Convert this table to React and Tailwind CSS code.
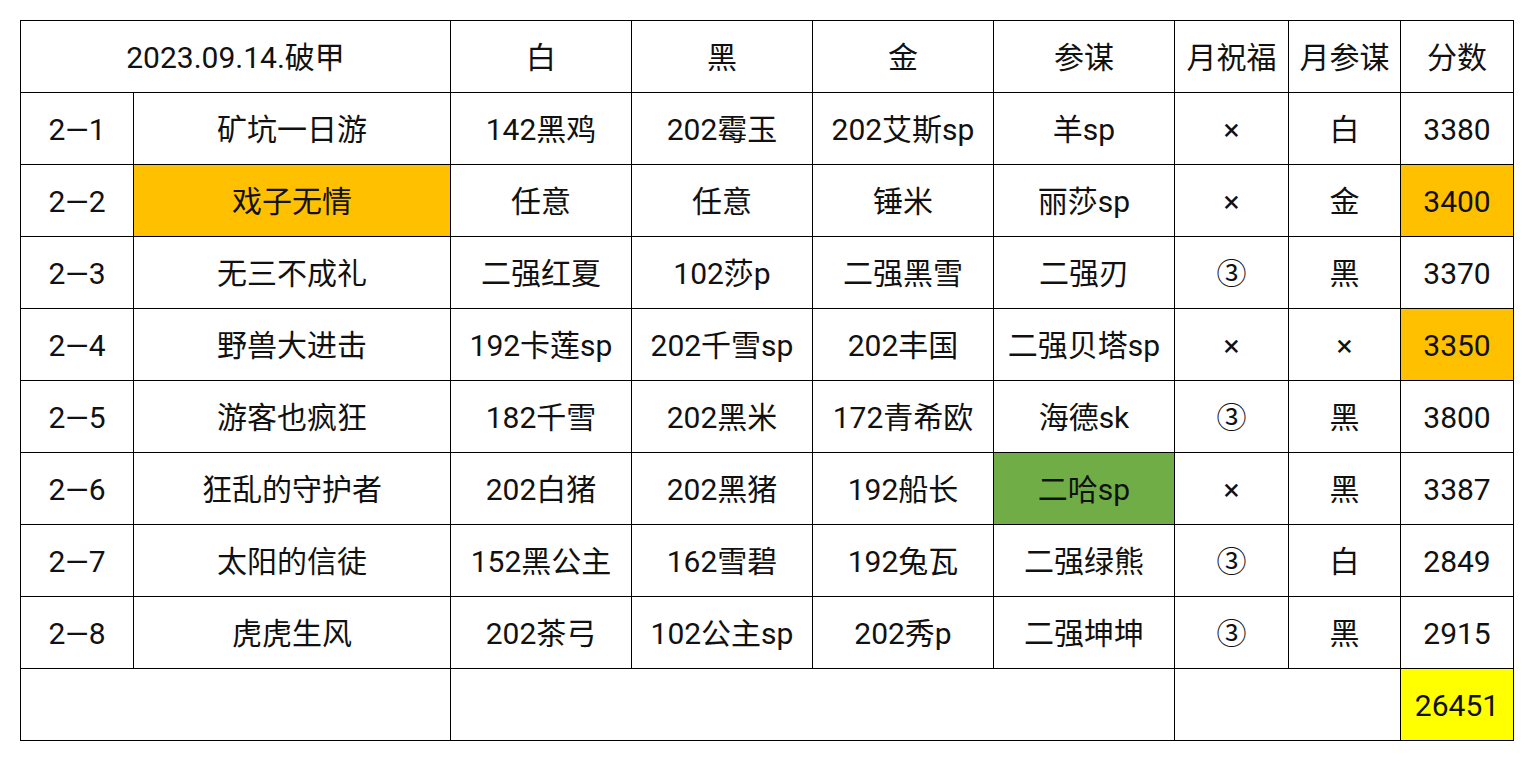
const rows = [
  ['2—1', '矿坑一日游', '142黑鸡', '202霉玉', '202艾斯sp', '羊sp', '×', '白', '3380'],
  ['2—2', '戏子无情', '任意', '任意', '锤米', '丽莎sp', '×', '金', '3400'],
  ['2—3', '无三不成礼', '二强红夏', '102莎p', '二强黑雪', '二强刃', '③', '黑', '3370'],
  ['2—4', '野兽大进击', '192卡莲sp', '202千雪sp', '202丰国', '二强贝塔sp', '×', '×', '3350'],
  ['2—5', '游客也疯狂', '182千雪', '202黑米', '172青希欧', '海德sk', '③', '黑', '3800'],
  ['2—6', '狂乱的守护者', '202白猪', '202黑猪', '192船长', '二哈sp', '×', '黑', '3387'],
  ['2—7', '太阳的信徒', '152黑公主', '162雪碧', '192兔瓦', '二强绿熊', '③', '白', '2849'],
  ['2—8', '虎虎生风', '202茶弓', '102公主sp', '202秀p', '二强坤坤', '③', '黑', '2915'],
];

// cells with a fill, keyed by "row-col"
const fills = {
  '1-1': 'bg-[#ffc000]',
  '1-8': 'bg-[#ffc000]',
  '3-8': 'bg-[#ffc000]',
  '5-5': 'bg-[#70ad47]',
};

const widths = ['w-[113px]', 'w-[317px]', 'w-[181px]', 'w-[181px]', 'w-[181px]', 'w-[181px]', 'w-[114px]', 'w-[112px]', 'w-[113px]'];

function Cell({ children, className = '', colSpan }) {
  return (
    <td colSpan={colSpan} className={`h-[72px] border border-black p-0 pt-[2px] text-center align-middle ${className}`}>
      {children}
    </td>
  );
}

export default function App() {
  return (
    <div className="min-h-screen bg-white p-[20px] text-[30px] leading-none text-[#111] [font-family:Roboto,'Noto_Sans_CJK_SC',sans-serif]">
      <table className="w-[1494px] table-fixed border-collapse">
        <colgroup>
          {widths.map((w, i) => (
            <col key={i} className={w} />
          ))}
        </colgroup>
        <tbody>
          <tr>
            <Cell colSpan={2}>2023.09.14.破甲</Cell>
            <Cell>白</Cell>
            <Cell>黑</Cell>
            <Cell>金</Cell>
            <Cell>参谋</Cell>
            <Cell>月祝福</Cell>
            <Cell>月参谋</Cell>
            <Cell>分数</Cell>
          </tr>
          {rows.map((r, i) => (
            <tr key={i}>
              {r.map((v, j) => (
                <Cell key={j} className={fills[`${i}-${j}`] || ''}>
                  {v}
                </Cell>
              ))}
            </tr>
          ))}
          <tr>
            <Cell colSpan={2} />
            <Cell colSpan={4} />
            <Cell colSpan={2} />
            <Cell className="bg-[#ffff00]">26451</Cell>
          </tr>
        </tbody>
      </table>
    </div>
  );
}
